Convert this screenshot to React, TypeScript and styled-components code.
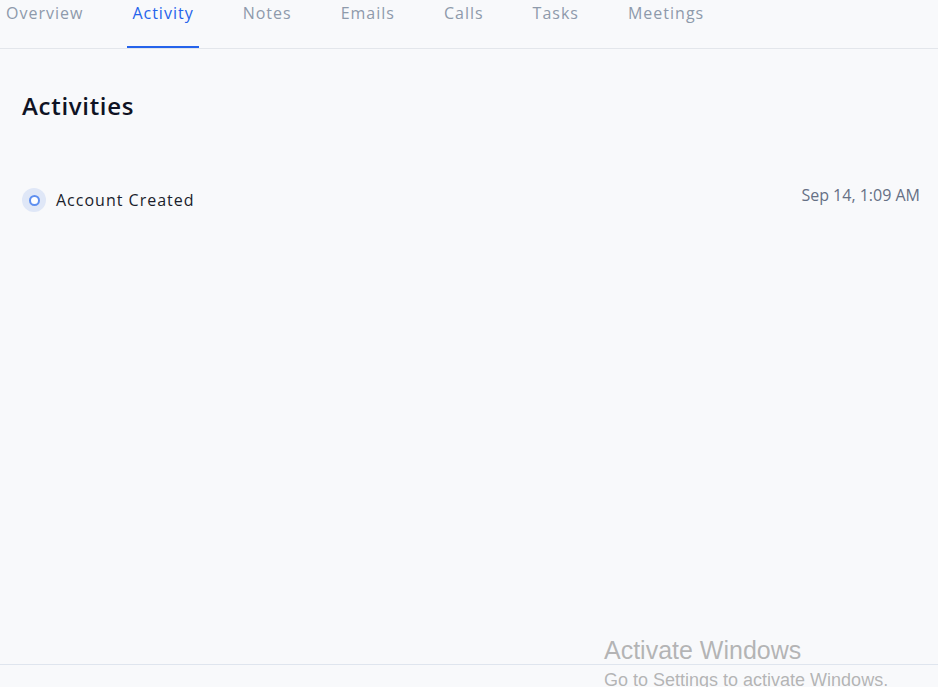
import React from "react";
import styled, { createGlobalStyle } from "styled-components";

const Global = createGlobalStyle`
  html, body { margin: 0; padding: 0; background: #f8f9fb; }
  body { font-family: "Open Sans", "Noto Sans", sans-serif; }
  #root { min-height: 100vh; }
`;

const Page = styled.div`
  position: relative;
  height: 687px;
  overflow: hidden;
  background: #f8f9fb;
  display: flex;
  flex-direction: column;
`;

const TabBar = styled.nav`
  display: flex;
  gap: 39px;
  padding-left: 1px;
  height: 48px;
  border-bottom: 1px solid #e3e6eb;
  box-sizing: content-box;
`;

const Tab = styled.div<{ $active?: boolean }>`
  padding: 3px 5px 0;
  font-size: 16px;
  font-weight: 500;
  letter-spacing: 1px;
  color: ${(p) => (p.$active ? "#2563eb" : "#8e9aab")};
  border-bottom: 2px solid ${(p) => (p.$active ? "#2563eb" : "transparent")};
  box-sizing: content-box;
  height: 43px;
  line-height: 20px;
`;

const Content = styled.main`
  flex: 1;
  padding: 41px 18px 0 22px;
  border-bottom: 1px solid #dfe5ee;
`;

const Heading = styled.h2`
  margin: 0;
  font-size: 24px;
  font-weight: 600;
  letter-spacing: 0.7px;
  color: #0f1324;
  line-height: 32px;
`;

const ActivityRow = styled.div`
  margin-top: 65px;
  display: flex;
  align-items: flex-start;
  justify-content: space-between;
`;

const ActivityMain = styled.div`
  display: flex;
  align-items: center;
  gap: 10px;
  padding-top: 1px;
`;

const Dot = styled.span`
  width: 24px;
  height: 24px;
  border-radius: 50%;
  background: #dfe7f7;
  display: flex;
  align-items: center;
  justify-content: center;
  &::after {
    content: "";
    width: 7px;
    height: 7px;
    border-radius: 50%;
    border: 2px solid #5e8ff0;
    background: #ffffff;
  }
`;

const ActivityLabel = styled.span`
  font-size: 16px;
  letter-spacing: 1px;
  color: #1a1d2b;
`;

const ActivityTime = styled.span`
  font-size: 16px;
  color: #667085;
  margin-top: -3px;
`;

const Spacer = styled.div`
  height: 22px;
`;

const Watermark = styled.div`
  position: absolute;
  left: 604px;
  top: 634px;
  font-family: "Liberation Sans", "DejaVu Sans", sans-serif;
  color: rgba(150, 150, 150, 0.7);
  pointer-events: none;
`;

const WatermarkTitle = styled.div`
  font-size: 25px;
  line-height: 32px;
`;

const WatermarkSub = styled.div`
  margin-top: 3px;
  font-size: 18px;
  line-height: 22px;
`;

const tabs = ["Overview", "Activity", "Notes", "Emails", "Calls", "Tasks", "Meetings"];

export default function App() {
  return (
    <>
      <Global />
      <Page>
        <TabBar>
          {tabs.map((t) => (
            <Tab key={t} $active={t === "Activity"}>
              {t}
            </Tab>
          ))}
        </TabBar>
        <Content>
          <Heading>Activities</Heading>
          <ActivityRow>
            <ActivityMain>
              <Dot />
              <ActivityLabel>Account Created</ActivityLabel>
            </ActivityMain>
            <ActivityTime>Sep 14, 1:09 AM</ActivityTime>
          </ActivityRow>
        </Content>
        <Spacer />
        <Watermark>
          <WatermarkTitle>Activate Windows</WatermarkTitle>
          <WatermarkSub>Go to Settings to activate Windows.</WatermarkSub>
        </Watermark>
      </Page>
    </>
  );
}
